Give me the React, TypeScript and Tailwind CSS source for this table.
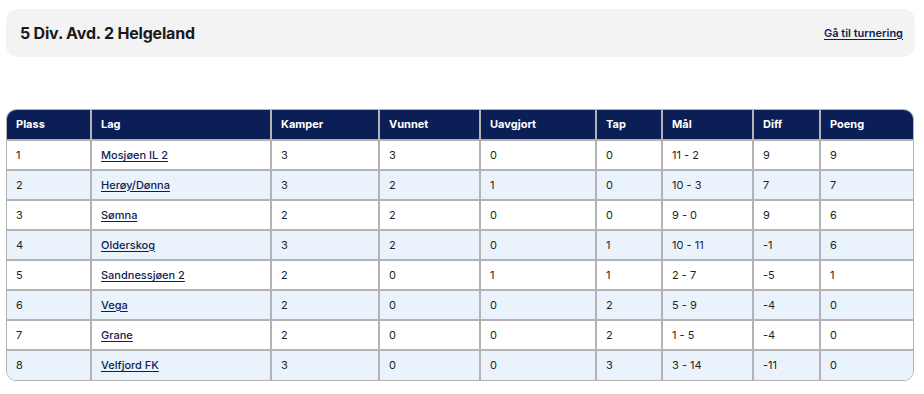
import React from "react";

const rows = [
  ["1", "Mosjøen IL 2", "3", "3", "0", "0", "11 - 2", "9", "9"],
  ["2", "Herøy/Dønna", "3", "2", "1", "0", "10 - 3", "7", "7"],
  ["3", "Sømna", "2", "2", "0", "0", "9 - 0", "9", "6"],
  ["4", "Olderskog", "3", "2", "0", "1", "10 - 11", "-1", "6"],
  ["5", "Sandnessjøen 2", "2", "0", "1", "1", "2 - 7", "-5", "1"],
  ["6", "Vega", "2", "0", "0", "2", "5 - 9", "-4", "0"],
  ["7", "Grane", "2", "0", "0", "2", "1 - 5", "-4", "0"],
  ["8", "Velfjord FK", "3", "0", "0", "3", "3 - 14", "-11", "0"],
];

const heads = ["Plass", "Lag", "Kamper", "Vunnet", "Uavgjort", "Tap", "Mål", "Diff", "Poeng"];
const widths = [84, 180, 108, 101, 116, 66, 91, 67, 95];

export default function App() {
  return (
    <div className="w-[924px] h-[394px] bg-white font-['Inter',sans-serif] text-[#1f1f1f]">
      <div className="pt-[9px] pl-[6px]">
        <div className="w-[909px] h-[48px] rounded-[12px] bg-[#f3f3f3] flex items-center justify-between pl-[14px] pr-[12px]">
          <h1 className="text-[16px] font-bold text-[#1a1a1a] tracking-[-0.2px]">5 Div. Avd. 2 Helgeland</h1>
          <a href="#" className="text-[11px] font-semibold text-[#0b1f56] underline underline-offset-2">Gå til turnering</a>
        </div>
        <div className="mt-[52px] w-[908px] rounded-[10px] overflow-hidden border border-[#b3b3b3]">
          <table className="w-full table-fixed border-collapse text-[11px]">
            <colgroup>
              {widths.map((w, i) => (
                <col key={i} style={{ width: w }} />
              ))}
            </colgroup>
            <thead>
              <tr className="bg-[#0b1f56] text-white h-[30px]">
                {heads.map((h, i) => (
                  <th key={i} className="text-left font-bold px-[9px] border-x-2 border-[#b3b3b3] first:border-l-0 last:border-r-0 border-b-2">
                    {h}
                  </th>
                ))}
              </tr>
            </thead>
            <tbody>
              {rows.map((r, ri) => (
                <tr key={ri} className={`h-[30px] ${ri % 2 === 1 ? "bg-[#eaf2fb]" : "bg-white"}`}>
                  {r.map((c, ci) => (
                    <td key={ci} className="px-[9px] border-2 border-[#b3b3b3] first:border-l-0 last:border-r-0 [tr:last-child>&]:border-b-0">
                      {ci === 1 ? (
                        <a href="#" className="text-[#0b1f56] underline underline-offset-2 font-medium">{c}</a>
                      ) : (
                        c
                      )}
                    </td>
                  ))}
                </tr>
              ))}
            </tbody>
          </table>
        </div>
      </div>
    </div>
  );
}
